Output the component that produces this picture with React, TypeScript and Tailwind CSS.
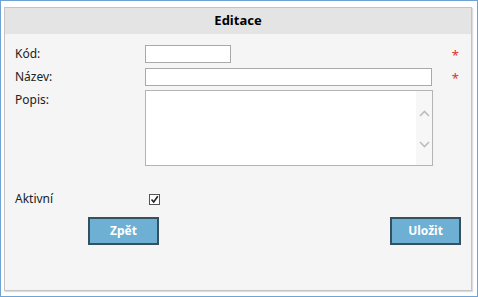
export default function App() {
  return (
    <div
      className="h-[297px] w-[478px] border border-[#6fa3d4] bg-white pb-[5px] pl-[3px] pr-[5px] pt-[6px] text-[12px] text-[#222]"
      style={{ fontFamily: '"Noto Sans", "Open Sans", sans-serif' }}
    >
      <div className="flex h-full flex-col border border-[#c4c4c4] bg-[#f5f5f5] shadow-[1px_1px_1px_#ddd]">
        {/* Header */}
        <div className="flex h-[26px] items-center justify-center bg-[#e4e4e4] text-[13px] font-bold text-black">
          Editace
        </div>

        {/* Form */}
        <div className="flex flex-col pl-[10px] pr-[10px] pt-[10px]">
          <div className="flex h-[19px] items-center">
            <span className="w-[130px]">Kód:</span>
            <div className="h-[18px] w-[86px] border border-[#a9a9a9] bg-white" />
            <span className="ml-auto mr-[2px] mt-[4px] text-[13px] leading-none text-[#e23030]">*</span>
          </div>

          <div className="mt-[4px] flex h-[19px] items-center">
            <span className="w-[130px]">Název:</span>
            <div className="h-[18px] w-[287px] border border-[#a9a9a9] bg-white" />
            <span className="ml-auto mr-[2px] mt-[4px] text-[13px] leading-none text-[#e23030]">*</span>
          </div>

          <div className="mt-[4px] flex">
            <span className="w-[130px] pt-[1px]">Popis:</span>
            <div className="flex h-[76px] w-[288px] justify-end border border-[#b4b4b4] bg-white">
              <div className="flex w-[16px] flex-col items-center justify-between bg-[#f7f7f7] pb-[17px] pt-[19px] text-[#bdbdbd]">
                <svg width="11" height="7" viewBox="0 0 11 7" fill="none" stroke="currentColor" strokeWidth="1.6">
                  <path d="M1 6L5.5 1.5L10 6" />
                </svg>
                <svg width="11" height="7" viewBox="0 0 11 7" fill="none" stroke="currentColor" strokeWidth="1.6">
                  <path d="M1 1L5.5 5.5L10 1" />
                </svg>
              </div>
            </div>
          </div>

          <div className="mt-[25px] flex h-[16px] items-center">
            <span className="w-[134px]">Aktivní</span>
            <div className="flex h-[11px] w-[11px] items-center justify-center border border-[#555] bg-white">
              <svg width="9" height="9" viewBox="0 0 9 9" fill="none" stroke="#222" strokeWidth="1.6">
                <path d="M1.5 4.5L3.7 7L7.8 1.2" />
              </svg>
            </div>
          </div>

          <div className="mt-[10px] flex justify-between pl-[73px]">
            <button className="h-[28px] w-[71px] border-2 border-[#35505f] bg-[#6db0d4] text-[12px] font-bold text-white">
              Zpět
            </button>
            <button className="h-[28px] w-[71px] border-2 border-[#35505f] bg-[#6db0d4] text-[12px] font-bold text-white">
              Uložit
            </button>
          </div>
        </div>
      </div>
    </div>
  );
}
